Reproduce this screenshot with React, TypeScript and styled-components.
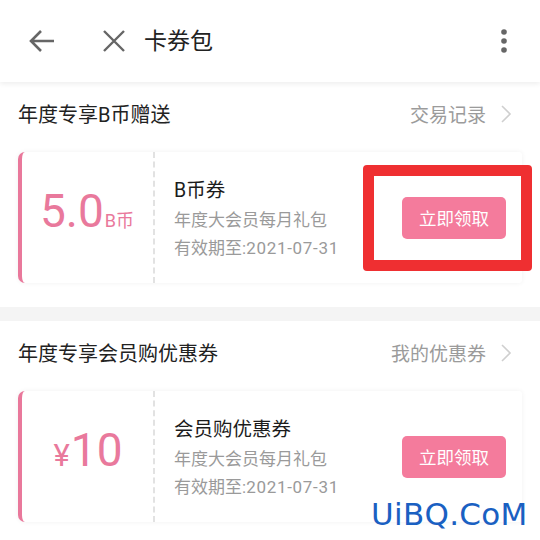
import React from "react";
import styled, { createGlobalStyle } from "styled-components";

const Global = createGlobalStyle`
  html, body { margin: 0; padding: 0; background: #fff; }
  body { font-family: Roboto, "Noto Sans CJK SC", sans-serif; width: 540px; height: 540px; overflow: hidden; }
  * { box-sizing: border-box; }
`;

const Page = styled.div`
  position: relative;
  width: 540px;
  height: 540px;
  background: #fff;
  overflow: hidden;
`;

const Header = styled.header`
  position: relative;
  z-index: 2;
  height: 82px;
  display: flex;
  align-items: center;
  padding: 0 32px 0 28px;
  background: #fff;
  box-shadow: 0 2px 5px rgba(0, 0, 0, 0.07);
`;

const IconBtn = styled.div<{ $mr: number }>`
  width: 28px;
  height: 28px;
  display: flex;
  align-items: center;
  justify-content: center;
  margin-right: ${(p) => p.$mr}px;
`;

const Title = styled.h1`
  margin: 0;
  flex: 1;
  font-size: 23px;
  font-weight: 400;
  color: #222;
  line-height: 1;
`;

const Section = styled.section`
  padding: 0 18px 24px;
  background: #fff;
`;

const Band = styled.div`
  height: 14px;
  background: #f4f4f4;
`;

const SectionHead = styled.div`
  height: 70px;
  padding-bottom: 7px;
  display: flex;
  align-items: center;
  justify-content: space-between;
`;

const SectionTitle = styled.span`
  font-size: 20px;
  color: #222;
`;

const Link = styled.span`
  display: flex;
  align-items: center;
  gap: 14px;
  font-size: 19px;
  color: #9b9b9b;
  margin-right: 10px;
`;

const Card = styled.div`
  height: 131px;
  display: flex;
  background: #fff;
  border-left: 4px solid #e9789b;
  border-radius: 7px 3px 3px 7px;
  box-shadow: 0 0 5px rgba(0, 0, 0, 0.06);
`;

const Amount = styled.div`
  width: 133px;
  display: flex;
  align-items: baseline;
  justify-content: center;
  padding-top: 36px;
  color: #e9799c;
  border-right: 2px dashed #e2e2e2;
`;

const Big = styled.span`
  font-size: 46px;
  line-height: 1;
`;

const Small = styled.span<{ $size: number }>`
  font-size: ${(p) => p.$size}px;
  line-height: 1;
  margin: 0 1px;
`;

const Info = styled.div`
  flex: 1;
  display: flex;
  flex-direction: column;
  justify-content: center;
  padding-left: 19px;
  padding-top: 2px;
`;

const InfoTitle = styled.div`
  font-size: 19.5px;
  color: #1c1c1c;
  line-height: 31px;
`;

const InfoLine = styled.div`
  font-size: 17px;
  color: #9a9a9a;
  line-height: 28px;
`;

const DateText = styled.span`
  letter-spacing: 0.7px;
`;

const Action = styled.div`
  display: flex;
  align-items: center;
  padding-right: 16px;
`;

const Button = styled.button`
  width: 104px;
  height: 42px;
  border: none;
  border-radius: 5px;
  background: #f47b9c;
  color: #fff;
  font-family: "Noto Sans CJK SC", sans-serif;
  font-size: 17.5px;
  padding: 0;
`;

const RedBox = styled.div`
  position: absolute;
  left: 363px;
  top: 165px;
  width: 169px;
  height: 106px;
  border: 11px solid #ef2f31;
  border-radius: 4px;
  z-index: 3;
`;

const Watermark = styled.div`
  position: absolute;
  left: 371px;
  top: 496px;
  font-family: "DejaVu Sans", Verdana, sans-serif;
  font-size: 31px;
  letter-spacing: 0.3px;
  line-height: 36px;
  color: #1a60c2;
  z-index: 3;
`;

const Chevron = () => (
  <svg width="12" height="18" viewBox="0 0 12 18">
    <polyline points="2,1 10,9 2,17" fill="none" stroke="#cfcfcf" strokeWidth="1.6" />
  </svg>
);

type CouponProps = {
  big: string;
  pre?: string;
  post?: string;
  title: string;
};

const Coupon = ({ big, pre, post, title }: CouponProps) => (
  <Card>
    <Amount>
      {pre && <Small $size={31}>{pre}</Small>}
      <Big>{big}</Big>
      {post && <Small $size={18}>{post}</Small>}
    </Amount>
    <Info>
      <InfoTitle>{title}</InfoTitle>
      <InfoLine>年度大会员每月礼包</InfoLine>
      <InfoLine>
        有效期至:<DateText>2021-07-31</DateText>
      </InfoLine>
    </Info>
    <Action>
      <Button>立即领取</Button>
    </Action>
  </Card>
);

export default function App() {
  return (
    <Page>
      <Global />
      <Header>
        <IconBtn $mr={44}>
          <svg width="28" height="28" viewBox="0 0 28 28">
            <path d="M26 14H3M13 4L3 14l10 10" fill="none" stroke="#666" strokeWidth="2.6" />
          </svg>
        </IconBtn>
        <IconBtn $mr={16}>
          <svg width="24" height="24" viewBox="0 0 24 24">
            <path d="M2 2L22 22M22 2L2 22" fill="none" stroke="#666" strokeWidth="2.4" />
          </svg>
        </IconBtn>
        <Title>卡券包</Title>
        <svg width="8" height="26" viewBox="0 0 8 26">
          <circle cx="4" cy="4" r="2.8" fill="#666" />
          <circle cx="4" cy="13" r="2.8" fill="#666" />
          <circle cx="4" cy="22" r="2.8" fill="#666" />
        </svg>
      </Header>
      <Section>
        <SectionHead>
          <SectionTitle>年度专享B币赠送</SectionTitle>
          <Link>
            交易记录
            <Chevron />
          </Link>
        </SectionHead>
        <Coupon big="5.0" post="B币" title="B币券" />
      </Section>
      <Band />
      <Section>
        <SectionHead>
          <SectionTitle>年度专享会员购优惠券</SectionTitle>
          <Link>
            我的优惠券
            <Chevron />
          </Link>
        </SectionHead>
        <Coupon big="10" pre="¥" title="会员购优惠券" />
      </Section>
      <RedBox />
      <Watermark>UiBQ.CoM</Watermark>
    </Page>
  );
}
